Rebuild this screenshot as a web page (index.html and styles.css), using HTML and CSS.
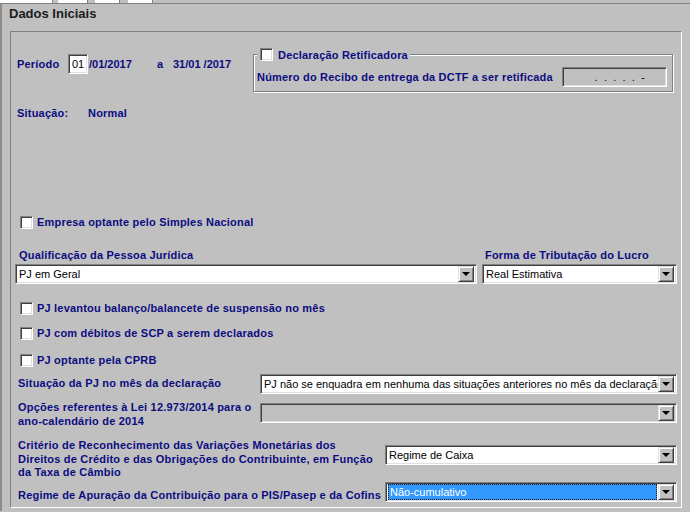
FILE: index.html
```html
<!DOCTYPE html>
<html lang="pt-BR">
<head>
<meta charset="utf-8">
<title>Dados Iniciais</title>
<link rel="stylesheet" href="styles.css">
</head>
<body>
<div class="tabs">
  <span class="tab tab-1"></span>
  <span class="tab tab-2"></span>
  <span class="tab tab-3"></span>
  <span class="tab tab-4"></span>
</div>
<div class="window">
  <h1 class="title">Dados Iniciais</h1>
  <div class="panel">
    <div class="top-row">
      <div class="periodo">
        <span class="lbl w-periodo">Período</span>
        <span class="field field-day">01</span>
        <span class="lbl tight w-ini">/01/2017</span>
        <span class="lbl w-a">a</span>
        <span class="lbl tight">31/01 /2017</span>
      </div>
      <fieldset class="retif">
        <legend class="retif-legend"><span class="check"></span><span class="lbl">Declaração Retificadora</span></legend>
        <div class="recibo-row">
          <span class="lbl">Número do Recibo de entrega da DCTF a ser retificada</span>
          <span class="field field-recibo">. . . . . -</span>
        </div>
      </fieldset>
    </div>

    <div class="situacao">
      <span class="lbl w-situacao">Situação:</span>
      <span class="lbl">Normal</span>
    </div>

    <div class="check-row simples"><span class="check"></span><span class="lbl">Empresa optante pelo Simples Nacional</span></div>

    <div class="qual-grid">
      <span class="lbl qual-lbl-l">Qualificação da Pessoa Jurídica</span>
      <span class="lbl qual-lbl-r">Forma de Tributação do Lucro</span>
      <div class="select"><span class="value">PJ em Geral</span><span class="btn"></span></div>
      <div class="select"><span class="value">Real Estimativa</span><span class="btn"></span></div>
    </div>

    <div class="check-row cb-1"><span class="check"></span><span class="lbl">PJ levantou balanço/balancete de suspensão no mês</span></div>
    <div class="check-row cb-2"><span class="check"></span><span class="lbl">PJ com débitos de SCP a serem declarados</span></div>
    <div class="check-row cb-3"><span class="check"></span><span class="lbl">PJ optante pela CPRB</span></div>

    <div class="form-row row-sit">
      <span class="lbl lbl-col-a lbl-up">Situação da PJ no mês da declaração</span>
      <div class="select"><span class="value">PJ não se enquadra em nenhuma das situações anteriores no mês da declaração</span><span class="btn"></span></div>
    </div>
    <div class="form-row row-op">
      <span class="lbl lbl-col-a lbl-down">Opções referentes à Lei 12.973/2014 para o<br>ano-calendário de 2014</span>
      <div class="select disabled"><span class="value"></span><span class="btn"></span></div>
    </div>
    <div class="form-row row-crit">
      <span class="lbl lbl-col-b lbl-multi">Critério de Reconhecimento das Variações Monetárias dos<br>Direitos de Crédito e das Obrigações do Contribuinte, em Função<br>da Taxa de Câmbio</span>
      <div class="select"><span class="value">Regime de Caixa</span><span class="btn"></span></div>
    </div>
    <div class="form-row row-reg">
      <span class="lbl lbl-col-b lbl-low">Regime de Apuração da Contribuição para o PIS/Pasep e da Cofins</span>
      <div class="select focused"><span class="value"><span class="hl">Não-cumulativo</span></span><span class="btn"></span></div>
    </div>
  </div>
</div>
</body>
</html>
```
FILE: styles.css
```css
html, body {
  margin: 0;
  padding: 0;
}
body {
  width: 690px;
  height: 512px;
  overflow: hidden;
  background: #c0c0c0;
  font-family: "Liberation Sans", Arial, sans-serif;
  font-size: 11px;
  color: #000;
}

/* top tab strip */
.tabs {
  display: flex;
  height: 3px;
}
.tab {
  display: block;
  height: 3px;
  background: #fff;
  border-right: 1px solid #808080;
}
.tab-1 { width: 52px; }
.tab-2 { width: 29px; margin-left: 5px; }
.tab-3 { width: 24px; margin-left: 7px; }
.tab-4 { width: 24px; margin-left: 8px; }

.window {
  border-top: 1px solid #808080;
  border-left: 2px solid #8c8c8c;
  padding: 0 8px 0 8px;
  height: 508px;
  box-sizing: border-box;
}

.title {
  margin: 0 0 0 -1px;
  padding: 0;
  height: 27px;
  line-height: 20px;
  font-size: 13px;
  font-weight: bold;
  color: #1c1c1c;
}

.panel {
  box-sizing: border-box;
  height: 477px;
  border-top: 1px solid #808080;
  border-left: 1px solid #808080;
  border-right: 1px solid #fff;
  border-bottom: 1px solid #fff;
  padding: 0 4px;
}

.lbl {
  font-weight: bold;
  color: #0c0c80;
  letter-spacing: 0.2px;
  line-height: 14px;
  white-space: nowrap;
}
.lbl.tight { letter-spacing: 0; }

/* generic sunken text field */
.field {
  box-sizing: border-box;
  display: flex;
  align-items: center;
  height: 20px;
  border: 1px solid;
  border-color: #808080 #fff #fff #808080;
  box-shadow: inset 1px 1px 0 #404040, inset -1px -1px 0 #dfdfdf;
  white-space: nowrap;
}

/* checkbox */
.check {
  display: inline-block;
  box-sizing: border-box;
  width: 13px;
  height: 13px;
  background: #fff;
  border: 1px solid;
  border-color: #808080 #fff #fff #808080;
  box-shadow: inset 1px 1px 0 #404040, inset -1px -1px 0 #dfdfdf;
  flex: none;
}

/* top row */
.top-row {
  display: flex;
  align-items: flex-start;
  height: 61px;
}
.periodo {
  display: flex;
  align-items: center;
  margin: 22px 0 0 2px;
  height: 20px;
}
.w-periodo { width: 51px; }
.field-day {
  width: 20px;
  background: #fff;
  padding-left: 3px;
  margin-right: 1px;
}
.w-ini { width: 68px; }
.w-a { width: 16px; }

.retif {
  box-sizing: border-box;
  width: 420px;
  margin: 16px 4px 0 auto;
  padding: 6px 5px 4px 3px;
  border: 1px solid #808080;
  box-shadow: 1px 1px 0 #fff, inset 1px 1px 0 #fff;
  min-width: 0;
}
.retif-legend {
  display: flex;
  align-items: center;
  padding: 0 2px 0 3px;
  background: #c0c0c0;
  height: 13px;
}
.retif-legend .check { margin-right: 5px; }
.recibo-row {
  display: flex;
  align-items: center;
  justify-content: space-between;
}
.field-recibo {
  width: 105px;
  justify-content: center;
  color: #000;
  background: #c0c0c0;
  padding-left: 12px;
  letter-spacing: 1.6px;
}

/* situacao */
.situacao {
  display: flex;
  margin: 13px 0 0 2px;
}
.w-situacao { width: 71px; }

/* checkbox rows */
.check-row {
  display: flex;
  align-items: center;
  gap: 4px;
  height: 14px;
  margin-left: 5px;
}
.simples { margin-top: 95px; }
.cb-1 { margin-top: 17px; }
.cb-2 { margin-top: 11px; }
.cb-3 { margin-top: 13px; }

/* selects */
.select {
  box-sizing: border-box;
  display: flex;
  align-items: center;
  height: 20px;
  padding: 2px;
  background: #fff;
  border: 1px solid;
  border-color: #808080 #fff #fff #808080;
  box-shadow: inset 1px 1px 0 #404040, inset -1px -1px 0 #dfdfdf;
  min-width: 0;
}
.select.disabled { background: #c0c0c0; }
.select .value {
  flex: 1;
  min-width: 0;
  overflow: hidden;
  white-space: nowrap;
  padding-left: 1px;
  line-height: 16px;
  height: 16px;
}
.select .btn {
  flex: none;
  position: relative;
  width: 16px;
  height: 16px;
  box-sizing: border-box;
  background: #c0c0c0;
  border: 1px solid;
  border-color: #dfdfdf #404040 #404040 #dfdfdf;
  box-shadow: inset 1px 1px 0 #fff, inset -1px -1px 0 #808080;
}
.select .btn::after {
  content: "";
  position: absolute;
  left: 3px;
  top: 5px;
  border-left: 4px solid transparent;
  border-right: 4px solid transparent;
  border-top: 4px solid #000;
}
.select.focused .value {
  padding-left: 0;
}
.select.focused .hl {
  display: block;
  box-sizing: border-box;
  height: 16px;
  line-height: 14px;
  margin-right: 1px;
  padding-left: 1px;
  background: #3399ff;
  color: #fff;
  border: 1px dotted #1a1a1a;
}

/* qualificacao grid */
.qual-grid {
  display: grid;
  grid-template-columns: 462px 195px;
  column-gap: 5px;
  row-gap: 2px;
  margin-top: 19px;
}
.qual-lbl-l { padding-left: 4px; }
.qual-lbl-r { padding-left: 3px; }

/* label + select rows */
.form-row {
  display: flex;
  align-items: center;
  margin-left: 3px;
}
.form-row .select { flex: 1; }
.lbl-col-a { width: 242px; flex: none; }
.lbl-col-b { width: 367px; flex: none; }
.lbl-multi { line-height: 13.5px; padding-top: 9px; }
.lbl-up { padding-bottom: 3px; }
.lbl-down { padding-top: 3px; }
.lbl-low { padding-top: 6px; }
.row-sit { margin-top: 7px; }
.row-op { margin-top: 3px; }
.row-crit { margin-top: 2px; }
.row-reg { margin-top: 2px; }
```
